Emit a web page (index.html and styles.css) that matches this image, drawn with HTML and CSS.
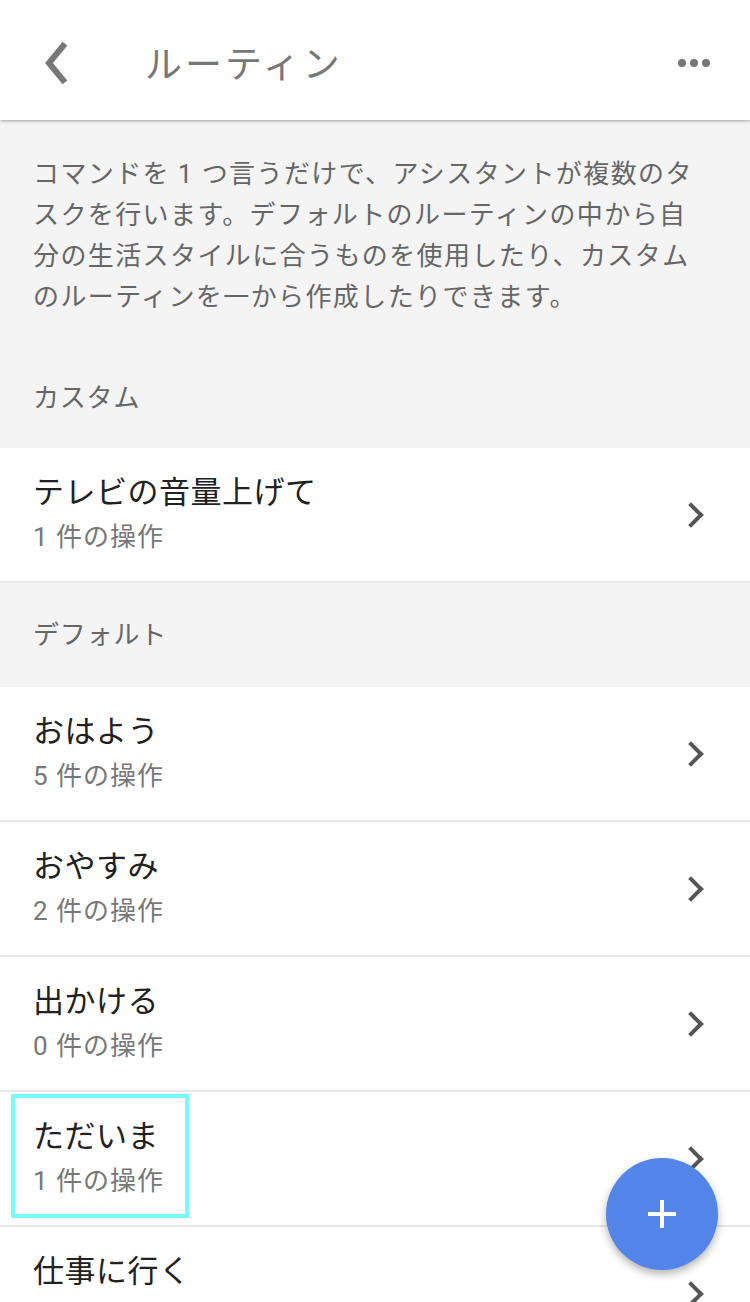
FILE: index.html
```html
<!DOCTYPE html>
<html lang="ja">
<head>
    <meta charset="UTF-8" />
    <meta name="viewport" content="width=device-width, initial-scale=1">
    <link rel="stylesheet" href="styles.css">
</head>
<body>

    <header class="topbar">
        <a class="back" href="#">
            <svg width="36" height="48" viewBox="0 0 36 48"><path d="M22 7 L8 24 L22 41" fill="none" stroke="#777" stroke-width="6" stroke-linecap="square"/></svg>
        </a>
        <h1 class="title">ルーティン</h1>
        <span class="more"><i></i><i></i><i></i></span>
    </header>

    <p class="intro">コマンドを 1 つ言うだけで、アシスタントが複数のタスクを行います。デフォルトのルーティンの中から自分の生活スタイルに合うものを使用したり、カスタムのルーティンを一から作成したりできます。</p>

    <div class="group-label first">カスタム</div>
    <ul class="list">
        <li>
            <div class="text"><div class="name">テレビの音量上げて</div><div class="count">1 件の操作</div></div>
            <span class="chev"></span>
        </li>
    </ul>

    <div class="group-label">デフォルト</div>
    <ul class="list">
        <li>
            <div class="text"><div class="name">おはよう</div><div class="count">5 件の操作</div></div>
            <span class="chev"></span>
        </li>
        <li>
            <div class="text"><div class="name">おやすみ</div><div class="count">2 件の操作</div></div>
            <span class="chev"></span>
        </li>
        <li>
            <div class="text"><div class="name">出かける</div><div class="count">0 件の操作</div></div>
            <span class="chev"></span>
        </li>
        <li>
            <div class="text focused"><div class="name">ただいま</div><div class="count">1 件の操作</div></div>
            <span class="chev"></span>
        </li>
        <li>
            <div class="text"><div class="name">仕事に行く</div><div class="count">0 件の操作</div></div>
            <span class="chev"></span>
        </li>
    </ul>

    <button class="fab"><span></span></button>

</body>
</html>
```

FILE: styles.css
```css
html,
body {
    margin: 0;
    padding: 0;
}
body {
    background: #f4f4f4;
    font-family: Roboto, "Noto Sans CJK JP", sans-serif;
    color: #212121;
    overflow: hidden;
    height: 1302px;
    position: relative;
}
.topbar {
    box-sizing: border-box;
    height: 120px;
    padding-top: 6px;
    background: #fff;
    display: flex;
    align-items: center;
    box-shadow: 0 1px 3px rgba(0,0,0,0.35);
    position: relative;
}
.back {
    display: flex;
    margin-left: 41px;
    width: 36px;
}
.title {
    margin: 0 0 0 68px;
    font-size: 37px;
    font-weight: normal;
    color: #777;
    letter-spacing: 3px;
    flex: 1;
    position: relative;
    top: -1px;
}
.more {
    display: flex;
    gap: 4px;
    margin-right: 40px;
}
.more i {
    width: 8px;
    height: 8px;
    border-radius: 50%;
    background: #777;
}
.intro {
    margin: 0;
    padding: 34px 40px 0 33px;
    font-size: 26px;
    line-height: 41px;
    letter-spacing: 1.4px;
    color: #666;
}
.group-label {
    height: 104px;
    padding-left: 33px;
    font-size: 26px;
    line-height: 36px;
    letter-spacing: 0.8px;
    color: #666;
    display: flex;
    align-items: center;
}
.group-label.first {
    box-sizing: border-box;
    height: 130px;
    padding-top: 62px;
    align-items: flex-start;
}
.list {
    list-style: none;
    margin: 0;
    padding: 0;
    background: #fff;
}
.list li {
    height: 133px;
    border-bottom: 2px solid #e8e8e8;
    display: flex;
    align-items: center;
    padding: 0 40px 0 33px;
}
.text {
    flex: 1;
    position: relative;
}
.name {
    font-size: 31px;
    line-height: 44px;
    color: #212121;
    letter-spacing: 0.5px;
}
.count {
    font-size: 26px;
    line-height: 44px;
    color: #777;
    letter-spacing: 1px;
}
.focused {
    flex: none;
}
.focused::after {
    content: "";
    position: absolute;
    left: -22px;
    top: -21px;
    width: 170px;
    height: 116px;
    border: 4px solid #78fafe;
}
.chev {
    width: 14px;
    height: 14px;
    border-top: 4px solid #555;
    border-right: 4px solid #555;
    transform: rotate(45deg);
    margin-right: 10px;
    margin-left: auto;
}
.fab {
    position: absolute;
    left: 606px;
    top: 1158px;
    width: 112px;
    height: 112px;
    border-radius: 50%;
    border: 0;
    background: #5384e8;
    box-shadow: 0 4px 8px rgba(0,0,0,0.3);
    padding: 0;
}
.fab span {
    position: absolute;
    left: 42px;
    top: 54px;
    width: 28px;
    height: 4px;
    background: #fff;
}
.fab span::after {
    content: "";
    position: absolute;
    left: 12px;
    top: -12px;
    width: 4px;
    height: 28px;
    background: #fff;
}
```
